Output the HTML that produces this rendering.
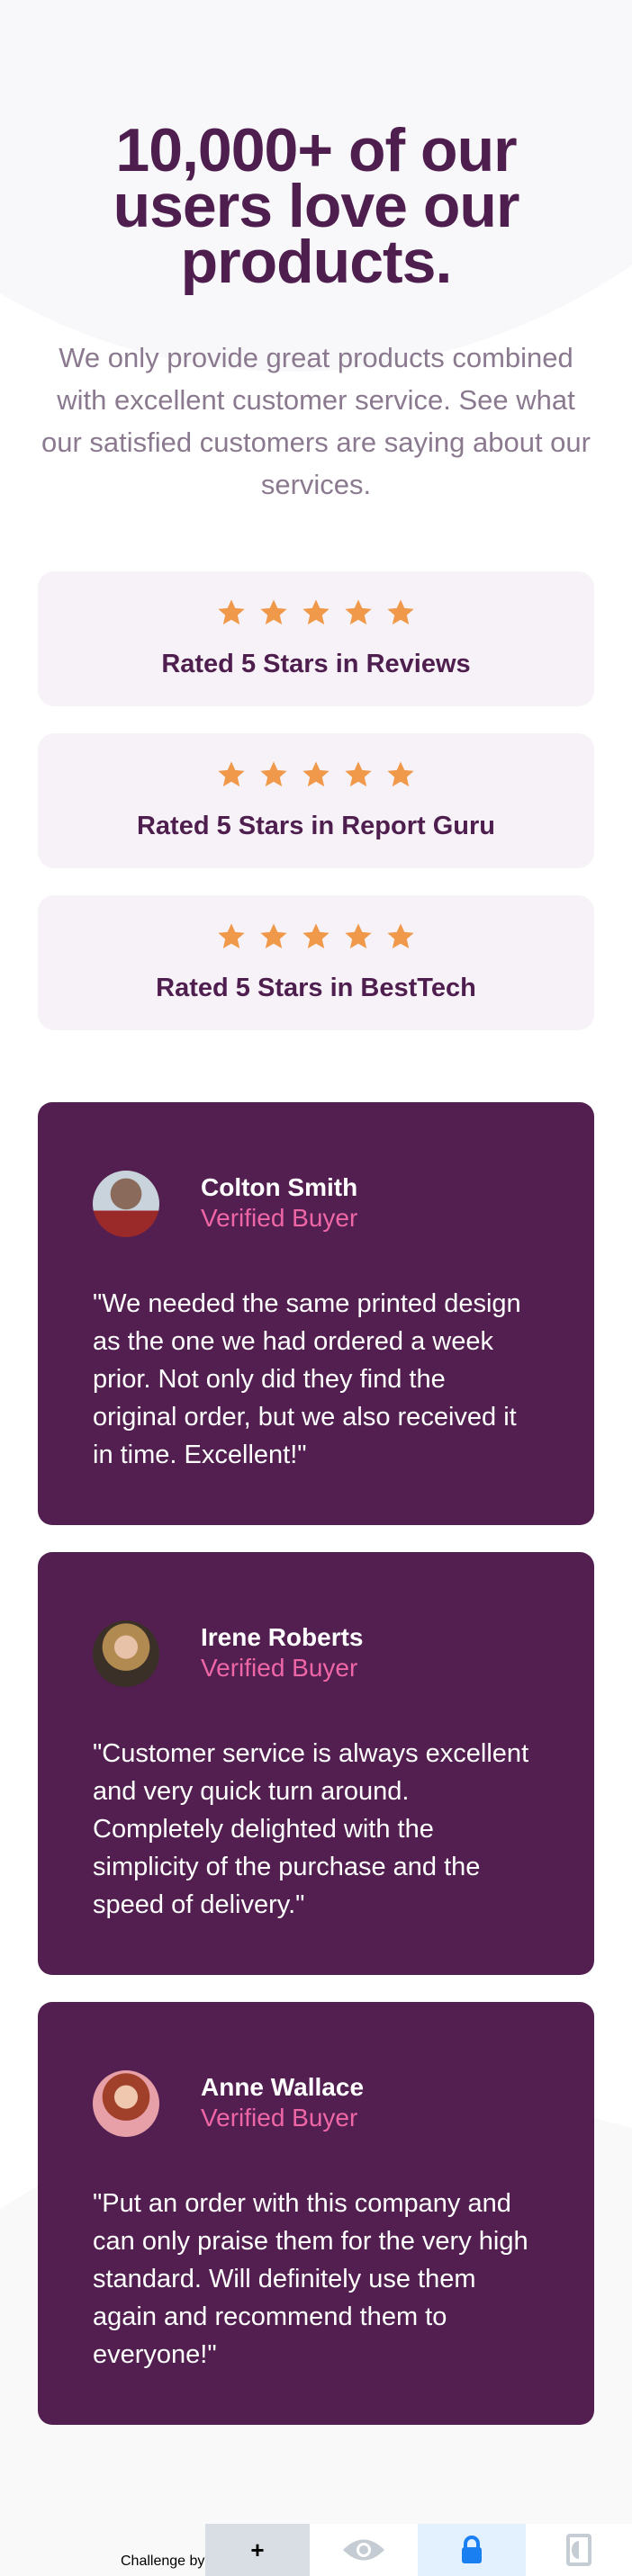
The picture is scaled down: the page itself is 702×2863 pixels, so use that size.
<!DOCTYPE html>
<html><head><meta charset="utf-8"><style>
*{margin:0;padding:0;box-sizing:border-box}
html,body{width:702px;height:2863px;overflow:hidden}
body{background:#fff;font-family:"Liberation Sans",sans-serif}
#w{position:relative;width:702px;height:2863px;overflow:hidden;background:#fff}
.bg1{position:absolute;left:-300px;top:-820px;width:1280px;height:1230px;border-radius:50%;background:#f8f7f9;transform:rotate(-20deg)}
.bg2{position:absolute;left:-200px;top:2330px;width:1300px;height:900px;border-radius:50%;background:#f9f9fa}
h1{position:absolute;left:0;width:702px;top:136px;text-align:center;color:#4e1e4f;font-size:68px;line-height:62px;font-weight:bold;letter-spacing:-1px}
.lead{position:absolute;left:10px;width:682px;top:374px;text-align:center;color:#8b7a8f;font-size:31px;line-height:47px}
.rc{position:absolute;left:42px;width:618px;height:150px;background:#f7f2f8;border-radius:18px}
.stars{position:absolute;top:30px;left:0;width:100%;text-align:center;font-size:0}
.stars svg{width:34px;height:32px;margin:0 6.5px}
.rc p{position:absolute;top:86px;width:100%;text-align:center;color:#4e1e4f;font-weight:bold;font-size:29px;line-height:34px}
.tc{position:absolute;left:42px;width:618px;height:470px;background:#521f50;border-radius:16px;color:#fff}
.av{position:absolute;left:61px;top:76px;width:74px;height:74px;border-radius:50%}
.nm{position:absolute;left:181px;top:78px;font-weight:bold;font-size:28px;line-height:34px}
.vb{position:absolute;left:181px;top:112px;color:#ee66a6;font-size:28px;line-height:34px}
.q{position:absolute;left:61px;top:203px;font-size:29px;line-height:42px;white-space:nowrap}
.bar{position:absolute;top:2805px;height:58px}
</style></head><body><div id="w">
<div class="bg1"></div><div class="bg2"></div>
<h1>10,000+ of our<br>users love our<br>products.</h1>
<p class="lead">We only provide great products combined<br>with excellent customer service. See what<br>our satisfied customers are saying about our<br>services.</p>

<div class="rc" style="top:635px"><div class="stars">
<svg viewBox="0 0 24 24"><path fill="#f0994a" d="M12 1l3.2 7.2 7.8.7-5.9 5.2 1.8 7.7L12 17.8 5.1 21.8l1.8-7.7L1 8.9l7.8-.7z"/></svg><svg viewBox="0 0 24 24"><path fill="#f0994a" d="M12 1l3.2 7.2 7.8.7-5.9 5.2 1.8 7.7L12 17.8 5.1 21.8l1.8-7.7L1 8.9l7.8-.7z"/></svg><svg viewBox="0 0 24 24"><path fill="#f0994a" d="M12 1l3.2 7.2 7.8.7-5.9 5.2 1.8 7.7L12 17.8 5.1 21.8l1.8-7.7L1 8.9l7.8-.7z"/></svg><svg viewBox="0 0 24 24"><path fill="#f0994a" d="M12 1l3.2 7.2 7.8.7-5.9 5.2 1.8 7.7L12 17.8 5.1 21.8l1.8-7.7L1 8.9l7.8-.7z"/></svg><svg viewBox="0 0 24 24"><path fill="#f0994a" d="M12 1l3.2 7.2 7.8.7-5.9 5.2 1.8 7.7L12 17.8 5.1 21.8l1.8-7.7L1 8.9l7.8-.7z"/></svg>
</div><p>Rated 5 Stars in Reviews</p></div>

<div class="rc" style="top:815px"><div class="stars">
<svg viewBox="0 0 24 24"><path fill="#f0994a" d="M12 1l3.2 7.2 7.8.7-5.9 5.2 1.8 7.7L12 17.8 5.1 21.8l1.8-7.7L1 8.9l7.8-.7z"/></svg><svg viewBox="0 0 24 24"><path fill="#f0994a" d="M12 1l3.2 7.2 7.8.7-5.9 5.2 1.8 7.7L12 17.8 5.1 21.8l1.8-7.7L1 8.9l7.8-.7z"/></svg><svg viewBox="0 0 24 24"><path fill="#f0994a" d="M12 1l3.2 7.2 7.8.7-5.9 5.2 1.8 7.7L12 17.8 5.1 21.8l1.8-7.7L1 8.9l7.8-.7z"/></svg><svg viewBox="0 0 24 24"><path fill="#f0994a" d="M12 1l3.2 7.2 7.8.7-5.9 5.2 1.8 7.7L12 17.8 5.1 21.8l1.8-7.7L1 8.9l7.8-.7z"/></svg><svg viewBox="0 0 24 24"><path fill="#f0994a" d="M12 1l3.2 7.2 7.8.7-5.9 5.2 1.8 7.7L12 17.8 5.1 21.8l1.8-7.7L1 8.9l7.8-.7z"/></svg>
</div><p>Rated 5 Stars in Report Guru</p></div>

<div class="rc" style="top:995px"><div class="stars">
<svg viewBox="0 0 24 24"><path fill="#f0994a" d="M12 1l3.2 7.2 7.8.7-5.9 5.2 1.8 7.7L12 17.8 5.1 21.8l1.8-7.7L1 8.9l7.8-.7z"/></svg><svg viewBox="0 0 24 24"><path fill="#f0994a" d="M12 1l3.2 7.2 7.8.7-5.9 5.2 1.8 7.7L12 17.8 5.1 21.8l1.8-7.7L1 8.9l7.8-.7z"/></svg><svg viewBox="0 0 24 24"><path fill="#f0994a" d="M12 1l3.2 7.2 7.8.7-5.9 5.2 1.8 7.7L12 17.8 5.1 21.8l1.8-7.7L1 8.9l7.8-.7z"/></svg><svg viewBox="0 0 24 24"><path fill="#f0994a" d="M12 1l3.2 7.2 7.8.7-5.9 5.2 1.8 7.7L12 17.8 5.1 21.8l1.8-7.7L1 8.9l7.8-.7z"/></svg><svg viewBox="0 0 24 24"><path fill="#f0994a" d="M12 1l3.2 7.2 7.8.7-5.9 5.2 1.8 7.7L12 17.8 5.1 21.8l1.8-7.7L1 8.9l7.8-.7z"/></svg>
</div><p>Rated 5 Stars in BestTech</p></div>

<div class="tc" style="top:1225px">
<div class="av" style="background:radial-gradient(circle at 50% 35%,#8a6a5a 0 28%,transparent 29%),linear-gradient(#c9d3dc 0 60%,#9a2a2a 60%)"></div>
<div class="nm">Colton Smith</div><div class="vb">Verified Buyer</div>
<p class="q">"We needed the same printed design<br>as the one we had ordered a week<br>prior. Not only did they find the<br>original order, but we also received it<br>in time. Excellent!"</p>
</div>

<div class="tc" style="top:1725px">
<div class="av" style="background:radial-gradient(circle at 50% 40%,#e8c2a8 0 22%,#b08a50 23% 45%,#3a3028 46%)"></div>
<div class="nm">Irene Roberts</div><div class="vb">Verified Buyer</div>
<p class="q">"Customer service is always excellent<br>and very quick turn around.<br>Completely delighted with the<br>simplicity of the purchase and the<br>speed of delivery."</p>
</div>

<div class="tc" style="top:2225px">
<div class="av" style="background:radial-gradient(circle at 50% 40%,#f0c8b0 0 22%,#a0402a 23% 45%,#e8a0a8 46%)"></div>
<div class="nm">Anne Wallace</div><div class="vb">Verified Buyer</div>
<p class="q">"Put an order with this company and<br>can only praise them for the very high<br>standard. Will definitely use them<br>again and recommend them to<br>everyone!"</p>
</div>

<div style="position:absolute;left:134px;top:2838px;font-size:16px;color:#000">Challenge by</div>
<div class="bar" style="left:228px;width:116px;background:#d9dee4;font-size:26px;font-weight:bold;text-align:center;line-height:58px">+</div>
<div class="bar" style="left:344px;width:120px;background:#fff"><svg width="50" height="30" viewBox="0 0 50 30" style="margin:14px 35px"><path d="M2 15Q25-8 48 15Q25 38 2 15Z" fill="#c5ccd3"/><circle cx="25" cy="15" r="8" fill="#fff"/><circle cx="25" cy="15" r="5" fill="#c5ccd3"/></svg></div>
<div class="bar" style="left:464px;width:120px;background:#e3f0fd"><svg width="26" height="34" viewBox="0 0 26 34" style="margin:12px 47px"><path d="M6 15V10a7 7 0 0 1 14 0v5" stroke="#1a7ff0" stroke-width="4" fill="none"/><rect x="2" y="14" width="22" height="18" rx="3" fill="#1a7ff0"/></svg></div>
<div class="bar" style="left:584px;width:118px;background:#fff"><svg width="28" height="36" viewBox="0 0 28 36" style="margin:11px 45px"><rect x="2" y="2" width="24" height="32" rx="2" fill="none" stroke="#c5ccd3" stroke-width="4"/><path d="M14 8a8 10 0 0 0 0 20Z" fill="#c5ccd3"/></svg></div>
</div></body></html>
